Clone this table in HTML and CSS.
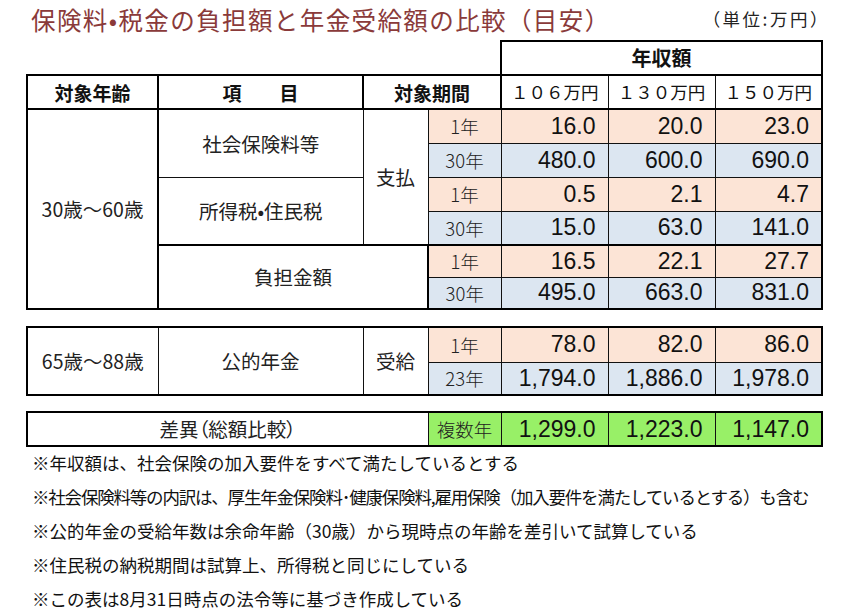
FILE: index.html
```html
<!DOCTYPE html>
<html lang="ja">
<head>
<meta charset="utf-8">
<link rel="stylesheet" href="styles.css">
</head>
<body>
<div class="page">
  <div class="top">
    <h1 class="title">保険料•税金の負担額と年金受給額の比較（目安）</h1>
    <p class="unit-note">（単位:万円）</p>
  </div>
  <table class="grid t1">
    <colgroup><col class="c1"><col class="c2"><col class="c3"><col class="c4"><col class="c5"><col class="c5"><col class="c5"></colgroup>
    <tr class="r-hd0">
      <td colspan="4" class="blank"></td>
      <td colspan="3" class="hd big tk-t tk-l tk-r tk-b">年収額</td>
    </tr>
    <tr class="r-hd1">
      <td class="hd tk-l tk-t tk-b tk-r">対象年齢</td>
      <td class="hd tk-t tk-b tk-r">項　　目</td>
      <td colspan="2" class="hd tk-t tk-b tk-r">対象期間</td>
      <td class="yen tk-b">１０６万円</td>
      <td class="yen tk-b">１３０万円</td>
      <td class="yen tk-b tk-r">１５０万円</td>
    </tr>
    <tr class="r1">
      <td rowspan="6" class="lbl tk-l tk-b tk-r">30歳～60歳</td>
      <td rowspan="2" class="lbl">社会保険料等</td>
      <td rowspan="4" class="lbl">支払</td>
      <td class="per o">1年</td>
      <td class="num o">16.0</td><td class="num o">20.0</td><td class="num o tk-r">23.0</td>
    </tr>
    <tr class="r1">
      <td class="per b">30年</td>
      <td class="num b">480.0</td><td class="num b">600.0</td><td class="num b tk-r">690.0</td>
    </tr>
    <tr class="r1">
      <td rowspan="2" class="lbl">所得税•住民税</td>
      <td class="per o">1年</td>
      <td class="num o">0.5</td><td class="num o">2.1</td><td class="num o tk-r">4.7</td>
    </tr>
    <tr class="r1">
      <td class="per b">30年</td>
      <td class="num b">15.0</td><td class="num b">63.0</td><td class="num b tk-r">141.0</td>
    </tr>
    <tr class="r2">
      <td rowspan="2" colspan="2" class="lbl tk-t tk-b">負担金額</td>
      <td class="per o tk-t tk-l">1年</td>
      <td class="num o tk-t">16.5</td><td class="num o tk-t">22.1</td><td class="num o tk-t tk-r">27.7</td>
    </tr>
    <tr class="r2">
      <td class="per b tk-l tk-b">30年</td>
      <td class="num b tk-b">495.0</td><td class="num b tk-b">663.0</td><td class="num b tk-b tk-r">831.0</td>
    </tr>
  </table>

  <table class="grid t2">
    <colgroup><col class="c1"><col class="c2"><col class="c3"><col class="c4"><col class="c5"><col class="c5"><col class="c5"></colgroup>
    <tr class="r3a">
      <td rowspan="2" class="lbl tk-l tk-t tk-b">65歳～88歳</td>
      <td rowspan="2" class="lbl tk-t tk-b">公的年金</td>
      <td rowspan="2" class="lbl tk-t tk-b">受給</td>
      <td class="per o tk-t">1年</td>
      <td class="num o tk-t">78.0</td><td class="num o tk-t">82.0</td><td class="num o tk-t tk-r">86.0</td>
    </tr>
    <tr class="r3b">
      <td class="per b tk-b">23年</td>
      <td class="num b tk-b">1,794.0</td><td class="num b tk-b">1,886.0</td><td class="num b tk-b tk-r">1,978.0</td>
    </tr>
  </table>

  <table class="grid t3">
    <colgroup><col class="c1"><col class="c2"><col class="c3"><col class="c4"><col class="c5"><col class="c5"><col class="c5"></colgroup>
    <tr class="r4">
      <td colspan="3" class="lbl prop tk-l tk-t tk-b">差異（総額比較）</td>
      <td class="per g tk-t tk-b">複数年</td>
      <td class="num g tk-t tk-b">1,299.0</td><td class="num g tk-t tk-b">1,223.0</td><td class="num g tk-t tk-b tk-r">1,147.0</td>
    </tr>
  </table>

  <ul class="notes">
    <li>※年収額は、社会保険の加入要件をすべて満たしているとする</li>
    <li class="tight">※社会保険料等の内訳は、厚生年金保険料･健康保険料,雇用保険（加入要件を満たしているとする）も含む</li>
    <li>※公的年金の受給年数は余命年齢（30歳）から現時点の年齢を差引いて試算している</li>
    <li>※住民税の納税期間は試算上、所得税と同じにしている</li>
    <li>※この表は8月31日時点の法令等に基づき作成している</li>
  </ul>
</div>
</body>
</html>
```

FILE: styles.css
```css
html, body {
  margin: 0;
  padding: 0;
  background: #ffffff;
}
body {
  font-family: "Noto Sans CJK JP", "Noto Sans", sans-serif;
  color: #111;
}
.page {
  width: 841px;
  height: 616px;
  overflow: hidden;
  padding-left: 26px;
  box-sizing: border-box;
}
.top {
  display: flex;
  justify-content: space-between;
  align-items: flex-start;
  width: 796px;
  height: 40px;
}
.title {
  margin: 5px 0 0 5px;
  font-size: 24.5px;
  font-weight: 400;
  line-height: 30px;
  color: #8a3a3a;
  white-space: nowrap;
  letter-spacing: 1.4px;
}
.unit-note {
  margin: 8px -8px 0 0;
  font-size: 17.5px;
  line-height: 22px;
  color: #222;
  white-space: nowrap;
  flex-shrink: 0;
  letter-spacing: 2.5px;
}
.grid {
  border-collapse: collapse;
  table-layout: fixed;
  width: 796px;
}
.c1 { width: 131px; }
.c2 { width: 205px; }
.c3 { width: 65px; }
.c4 { width: 73px; }
.c5 { width: 107px; }

.grid td {
  border: 1px solid #111;
  padding: 0;
  text-align: center;
  vertical-align: middle;
  white-space: nowrap;
  line-height: 1;
}
.grid td.blank {
  border: none;
}
.grid td.tk-t { border-top: 2px solid #000; }
.grid td.tk-b { border-bottom: 2px solid #000; }
.grid td.tk-l { border-left: 2px solid #000; }
.grid td.tk-r { border-right: 2px solid #000; }

.r-hd0 { height: 34px; }
.r-hd1 { height: 34px; }
.r1 { height: 34px; }
.r2 { height: 32px; }
.r3a { height: 35px; }
.r3b { height: 33px; }
.r4 { height: 34px; }

.hd {
  font-size: 19px;
  font-weight: 700;
}
.hd.big { font-size: 20px; }
.yen {
  font-size: 17.5px;
}
.lbl {
  font-size: 19.5px;
  color: #222;
}
.lbl.prop {
  font-feature-settings: "palt" 1;
}
.per {
  font-size: 18.5px;
  font-weight: 300;
  color: #222;
}
.num {
  font-family: "Liberation Sans", Arial, sans-serif;
  font-size: 23px;
  text-align: right !important;
  padding-right: 12px !important;
  color: #111;
}
.o { background: #fce4d6; }
.b { background: #dce6f1; }
.g { background: #98f067; }

.t2 { margin-top: 16px; }
.t3 { margin-top: 15px; }

.notes {
  list-style: none;
  margin: -1px 0 0 6px;
  padding: 0;
}
.notes li {
  font-size: 17.5px;
  line-height: 34px;
  color: #111;
  white-space: nowrap;
}
.notes li.tight {
  letter-spacing: -1.2px;
}
```
